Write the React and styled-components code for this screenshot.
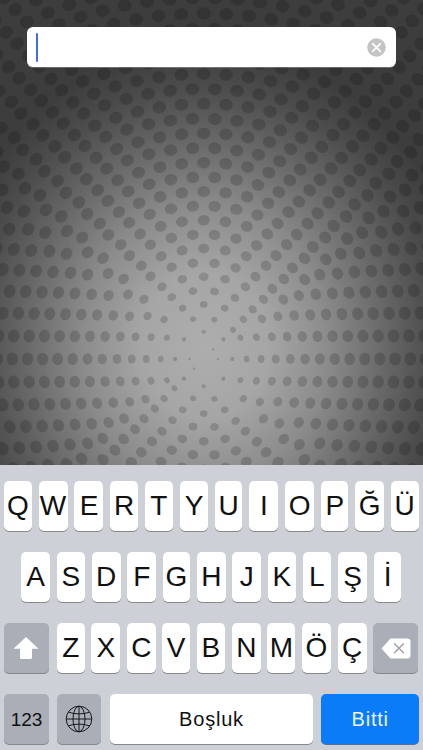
import React from "react";
import styled, { createGlobalStyle } from "styled-components";

const Global = createGlobalStyle`
  html, body { margin: 0; padding: 0; background: #cfd2d8; }
  #root { width: 423px; height: 750px; overflow: hidden; }
`;

const Screen = styled.div`
  width: 423px;
  height: 750px;
  display: flex;
  flex-direction: column;
  font-family: "Liberation Sans", Arial, sans-serif;
`;

const Wallpaper = styled.div`
  position: relative;
  height: 465px;
  overflow: hidden;
  padding: 27px 27px 0;
  box-sizing: border-box;
  background: radial-gradient(ellipse 265px 300px at 205px 345px, #adadad 0%, #a6a6a6 24%, #8c8c8c 46%, #686868 68%, #4c4c4c 86%, #3d3d3d 100%);
`;

const Dots = styled.svg`
  position: absolute;
  inset: 0;
  filter: blur(0.6px);
`;

const Field = styled.div`
  position: relative;
  height: 40px;
  width: 369px;
  background: #fff;
  border-radius: 6px;
  display: flex;
  align-items: center;
  justify-content: space-between;
  padding: 0 9px;
  box-sizing: border-box;
  box-shadow: 0 1px 0 rgba(255, 255, 255, 0.25);
`;

const Caret = styled.span`
  width: 2.4px;
  height: 29px;
  border-radius: 1px;
  background: #3f6ee8;
`;

const Keyboard = styled.div`
  flex: 1;
  background: #cdd0d6;
  padding-top: 16px;
  display: flex;
  flex-direction: column;
  gap: 21px;
`;

const Row = styled.div`
  display: flex;
  height: 50px;
  gap: ${(p) => p.$gap}px;
  padding-left: ${(p) => p.$pad}px;
`;

const Key = styled.div`
  width: ${(p) => p.$w}px;
  height: 50px;
  flex: none;
  margin-right: ${(p) => p.$after || 0}px;
  border-radius: 5px;
  display: flex;
  align-items: center;
  justify-content: center;
  color: ${(p) => (p.$kind === "done" ? "#eaf4ff" : "#111")};
  background: ${(p) =>
    p.$kind === "done" ? "#0a7cf8" : p.$kind === "fn" ? "#a9aeb7" : "#fff"};
  box-shadow: 0 1px 0 ${(p) => (p.$kind === "done" ? "#5a6f8c" : "#85888e")};
  font-size: ${(p) => (p.$kind === "fn" ? 19 : p.$kind ? 20 : 28)}px;
  letter-spacing: ${(p) => (p.$kind === "space" || p.$kind === "done" ? 0.8 : 0)}px;
  line-height: 1;
`;

const smooth = (a, b, x) => {
  const t = Math.min(1, Math.max(0, (x - a) / (b - a)));
  return t * t * (3 - 2 * t);
};

const dots = (() => {
  const cx = 203.7;
  const cy = 359;
  const out = [];
  for (let k = 1; k < 34; k++) {
    const n = 4 * k;
    const r0 = 14.2 * k + 0.04 * k * k;
    for (let i = 0; i < n; i++) {
      const a0 = (i / n) * Math.PI * 2;
      const stagger = (k % 2 ? 0.5 : 0) * ((Math.PI * 2) / n) * smooth(0.5, 0.85, Math.abs(Math.sin(a0)));
      const a = a0 + stagger;
      const r = r0 * (1 - 0.05 * Math.pow(Math.sin(a0), 2));
      const x = cx + r * Math.cos(a);
      const y = cy + r * Math.sin(a);
      if (x < -10 || x > 433 || y < -10 || y > 475) continue;
      const d = 14 * (1 - Math.exp(-r / 70));
      const deg = (Math.atan2(y - cy, x - cx) * 180) / Math.PI;
      out.push({ x, y, rx: (d / 2) * 0.88, ry: d / 2, deg });
    }
  }
  return out;
})();

const rows = [
  {
    gap: 6.9,
    pad: 4.3,
    keys: [["Q", 27.4], ["W", 29], ["E", 29], ["R", 27.3], ["T", 28.7], ["Y", 28], ["U", 27.4], ["I", 29], ["O", 29], ["P", 27.4], ["Ğ", 28.6], ["Ü", 27.7]],
  },
  {
    gap: 6.8,
    pad: 21.3,
    keys: [["A", 28.7], ["S", 28.3], ["D", 28.7], ["F", 28.7], ["G", 27.3], ["H", 28.7], ["J", 28.6], ["K", 28], ["L", 28.6], ["Ş", 29], ["İ", 27.7]],
  },
];
const row3 = [["Z", 27.7], ["X", 28.7], ["C", 28.7], ["V", 27.3], ["B", 28.7], ["N", 28.6], ["M", 28], ["Ö", 28.6], ["Ç", 29]];

const ClearIcon = () => (
  <svg width="19" height="19" viewBox="0 0 19 19" style={{ marginRight: 1 }}>
    <circle cx="9.5" cy="9.5" r="9.3" fill="#c4c4c4" />
    <path d="M5.6 5.6 13.4 13.4M13.4 5.6 5.6 13.4" stroke="#fff" strokeWidth="1.7" strokeLinecap="round" />
  </svg>
);

const ShiftIcon = () => (
  <svg width="26" height="24" viewBox="0 0 26 24">
    <path d="M13 1 25.5 12.8H19V21.5a1.5 1.5 0 0 1-1.5 1.5H8.5A1.5 1.5 0 0 1 7 21.5V12.8H0.5Z" fill="#fff" />
  </svg>
);

const DeleteIcon = () => (
  <svg width="30" height="21" viewBox="0 0 30 21">
    <path d="M9.5 0.5H26.5a3 3 0 0 1 3 3V17.5a3 3 0 0 1-3 3H9.5L0.5 10.5Z" fill="#fff" />
    <path d="M13.5 5.8 22.5 14.8M22.5 5.8 13.5 14.8" stroke="#9aa0a8" strokeWidth="1.4" strokeLinecap="round" />
  </svg>
);

const GlobeIcon = () => (
  <svg width="28" height="28" viewBox="0 0 28 28" fill="none" stroke="#15181c" strokeWidth="1">
    <circle cx="14" cy="14" r="12.8" />
    <ellipse cx="14" cy="14" rx="6" ry="12.8" />
    <path d="M14 1.2V26.8M1.2 14H26.8M3.4 7.2Q14 10.6 24.6 7.2M3.4 20.8Q14 17.4 24.6 20.8" />
  </svg>
);

export default function App() {
  return (
    <Screen>
      <Global />
      <Wallpaper>
        <Dots width="423" height="465" viewBox="0 0 423 465">
          {dots.map((d, i) => (
            <ellipse
              key={i}
              cx={d.x}
              cy={d.y}
              rx={d.rx}
              ry={d.ry}
              transform={`rotate(${d.deg} ${d.x} ${d.y})`}
              fill="#000"
              fillOpacity="0.16"
            />
          ))}
        </Dots>
        <Field>
          <Caret />
          <ClearIcon />
        </Field>
      </Wallpaper>
      <Keyboard>
        {rows.map((row) => (
          <Row key={row.pad} $gap={row.gap} $pad={row.pad}>
            {row.keys.map(([label, w]) => (
              <Key key={label} $w={w}>{label}</Key>
            ))}
          </Row>
        ))}
        <Row $gap={6.8} $pad={4.3}>
          <Key $w={44.4} $kind="fn" $after={1.5}><ShiftIcon /></Key>
          {row3.map(([label, w]) => (
            <Key key={label} $w={w}>{label}</Key>
          ))}
          <Key $w={44.7} $kind="fn"><DeleteIcon /></Key>
        </Row>
        <Row $gap={8.5} $pad={4.3}>
          <Key $w={44.4} $kind="fn">123</Key>
          <Key $w={44.3} $kind="fn"><GlobeIcon /></Key>
          <Key $w={203} $kind="space">Boşluk</Key>
          <Key $w={97.4} $kind="done">Bitti</Key>
        </Row>
      </Keyboard>
    </Screen>
  );
}
